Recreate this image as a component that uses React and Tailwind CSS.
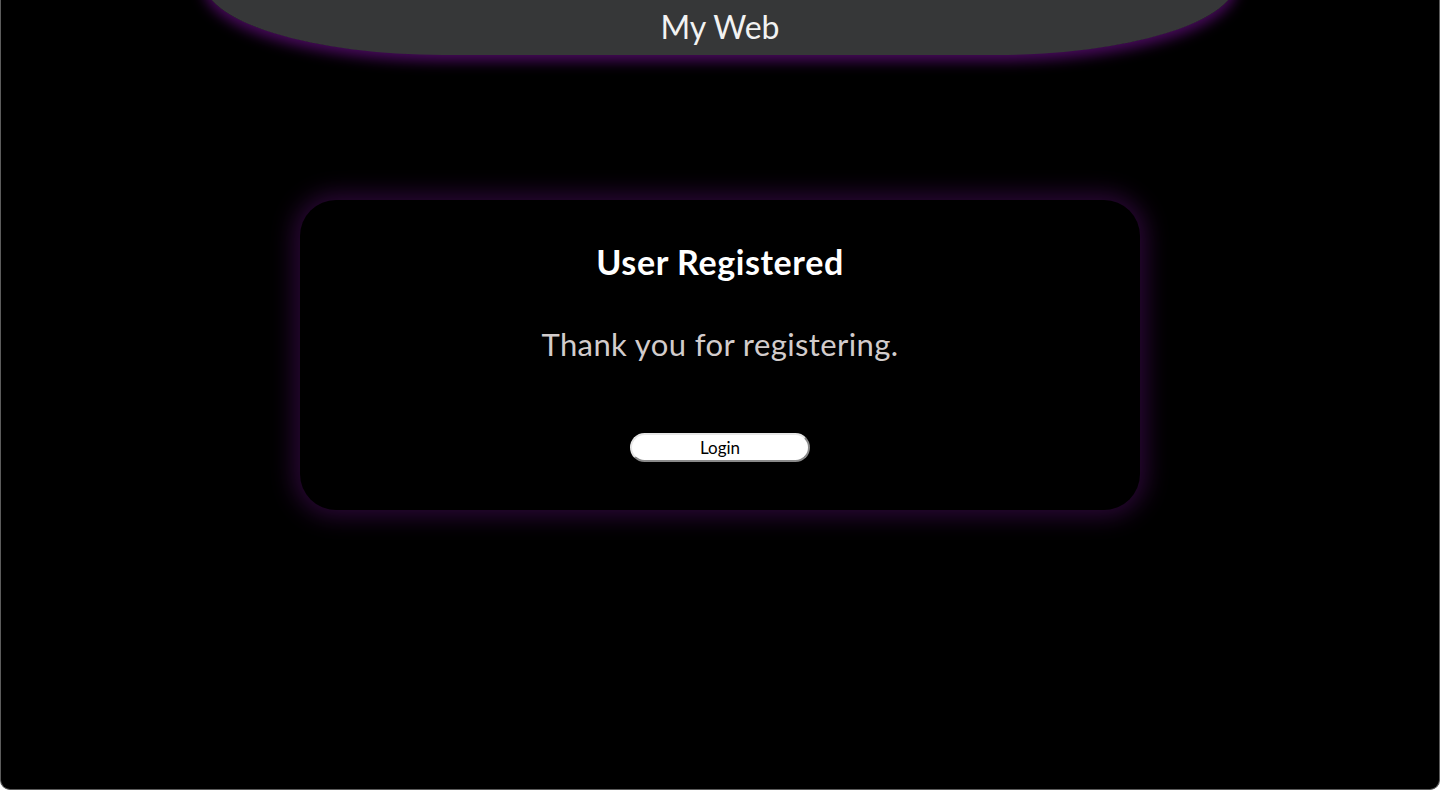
import React from 'react';

const App = () => {
  return (
    <div className="h-[790px] overflow-hidden bg-black border-x border-b border-[#5c5c5c] rounded-b-[10px] font-['Lato','Noto_Sans',sans-serif]">
      {/* Header */}
      <header className="mx-auto -mt-[20px] h-[75px] w-[1034px] bg-[#363738] rounded-bl-[240px_75px] rounded-br-[240px_75px] shadow-[0_6px_14px_#4a0b5e] flex items-end justify-center pb-[9px]">
        <h1 className="text-[32px] leading-[38px] text-[#f2f2f2]">My Web</h1>
      </header>

      {/* Card */}
      <main className="mt-[145px] flex justify-center">
        <div className="w-[840px] h-[310px] bg-black rounded-[36px] shadow-[0_0_24px_6px_#2c0838] flex flex-col items-center pt-[43px]">
          <h2 className="text-[34px] leading-[38px] tracking-[0.6px] font-bold text-white">User Registered</h2>
          <p className="mt-[45px] text-[31px] leading-[36px] tracking-[0.4px] text-[#d2cccc]">Thank you for registering.</p>
          <button className="mt-[71px] w-[180px] h-[29px] bg-white rounded-full border-[2px] border-[#e6e6e6] border-b-[#8a8a8a] border-r-[#8a8a8a] text-[17px] leading-none text-black">
            Login
          </button>
        </div>
      </main>
    </div>
  );
};

export default App;
